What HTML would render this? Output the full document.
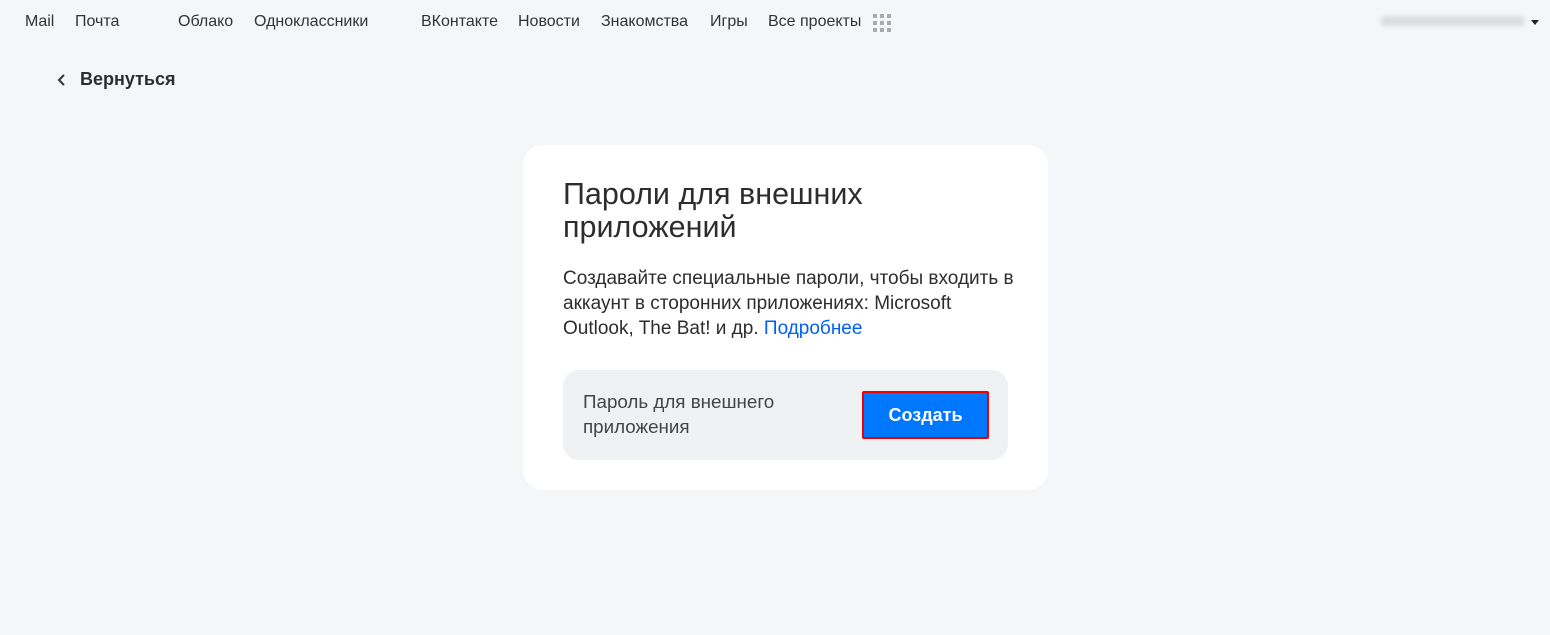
<!DOCTYPE html>
<html><head><meta charset="utf-8"><style>
body{margin:0;background:#f5f6f8;font-family:"Liberation Sans",sans-serif;width:1550px;height:635px;position:relative;overflow:hidden;color:#2c2d2e}
.nav{position:absolute;top:13px;font-size:16px;color:#333;white-space:nowrap}
.nav span{position:absolute}
.card{position:absolute;left:523px;top:145px;width:525px;height:345px;background:#fff;border-radius:20px}
h1{position:absolute;left:40px;top:33px;margin:0;font-size:30.5px;font-weight:normal;line-height:33px;color:#2c2d2e;white-space:nowrap}
.p{position:absolute;left:40px;top:121px;width:470px;font-size:19px;line-height:25px;color:#2c2d2e;white-space:nowrap}
.p a{color:#005ff9;text-decoration:none}
.box{position:absolute;left:40px;top:225px;width:445px;height:90px;background:#f0f1f3;border-radius:16px}
.box .t{position:absolute;left:20px;top:19px;font-size:18.8px;line-height:25px;color:#444}
.btn{position:absolute;left:299px;top:21px;width:127px;height:48px;background:#0077ff;border:2px solid #e00;box-sizing:border-box;color:#fff;font-weight:bold;font-size:18px;text-align:center;line-height:44px;border-radius:2px}
</style></head><body>
<div class="nav">
<span style="left:25px">Mail</span><span style="left:75px">Почта</span><span style="left:178px">Облако</span><span style="left:254px">Одноклассники</span><span style="left:421px">ВКонтакте</span><span style="left:518px">Новости</span><span style="left:601px">Знакомства</span><span style="left:710px">Игры</span><span style="left:768px">Все проекты</span>
</div>
<svg style="position:absolute;left:873px;top:14px" width="18" height="18"><g fill="#aaa"><rect x="0" y="0" width="4" height="4"/><rect x="7" y="0" width="4" height="4"/><rect x="14" y="0" width="4" height="4"/><rect x="0" y="7" width="4" height="4"/><rect x="7" y="7" width="4" height="4"/><rect x="14" y="7" width="4" height="4"/><rect x="0" y="14" width="4" height="4"/><rect x="7" y="14" width="4" height="4"/><rect x="14" y="14" width="4" height="4"/></g></svg>
<div style="position:absolute;left:1380px;top:16px;width:145px;height:10px;background:#ddd;border-radius:5px;filter:blur(2px)"></div>
<div style="position:absolute;left:1531px;top:20px;width:0;height:0;border-left:4px solid transparent;border-right:4px solid transparent;border-top:5px solid #222"></div>
<svg style="position:absolute;left:56px;top:73px" width="12" height="14"><path d="M8 2 L3 7 L8 12" fill="none" stroke="#333" stroke-width="2"/></svg>
<div style="position:absolute;left:80px;top:69px;font-size:18px;font-weight:bold;color:#2c2d2e">Вернуться</div>
<div class="card">
<h1>Пароли для внешних<br>приложений</h1>
<div class="p">Создавайте специальные пароли, чтобы входить в<br>аккаунт в сторонних приложениях: Microsoft<br>Outlook, The Bat! и др. <a>Подробнее</a></div>
<div class="box"><div class="t">Пароль для внешнего<br>приложения</div><div class="btn">Создать</div></div>
</div>
</body></html>
